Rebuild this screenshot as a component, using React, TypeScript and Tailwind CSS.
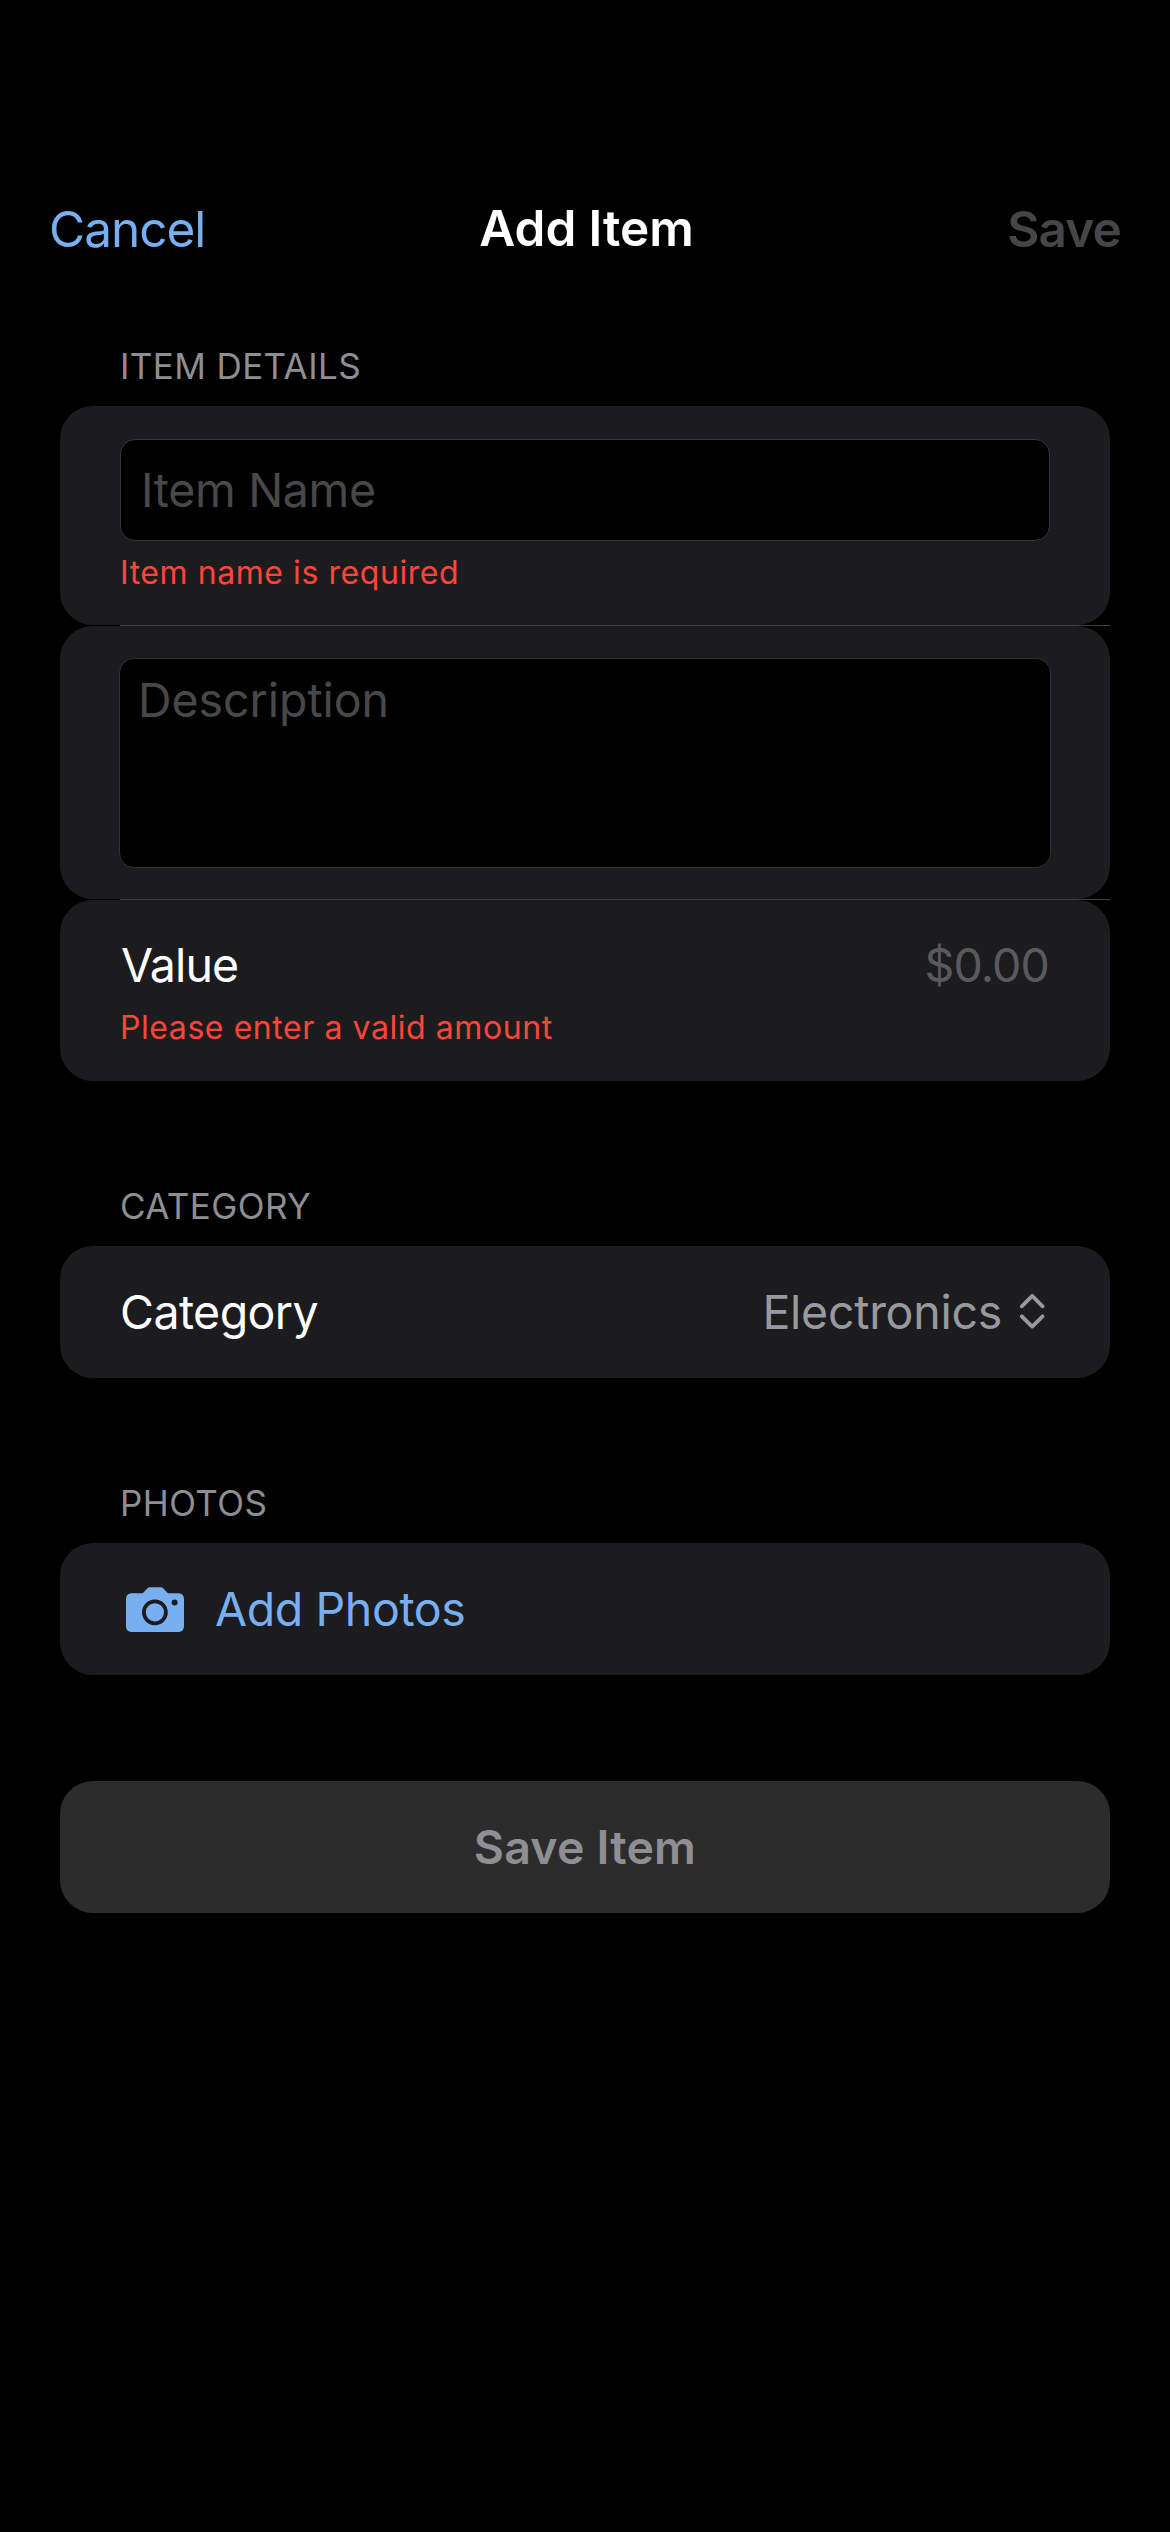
import type { ReactNode } from "react";

function Heading({ children }: { children: ReactNode }) {
  return (
    <h2 className="mb-[20px] ml-[120px] h-[40px] text-[35px] leading-[40px] tracking-[0.4px] text-[#8e8e93]">
      {children}
    </h2>
  );
}

function Card({ className, children }: { className: string; children: ReactNode }) {
  return <div className={`mx-[60px] rounded-[33px] bg-[#1c1c1e] px-[60px] ${className}`}>{children}</div>;
}

function Separator() {
  return <div className="mr-[60px] ml-[120px] h-px bg-[#3d3d41]" />;
}

function ErrorText({ children }: { children: ReactNode }) {
  return <p className="h-[40px] text-[32px] leading-[40px] tracking-[0.565px] text-[#ff453a]">{children}</p>;
}

function CameraIcon() {
  return (
    <svg width="58" height="46" viewBox="0 0 58 46" className="shrink-0">
      <path
        fill="#78aff0"
        d="M6 6.3H15.5C16.3 6.3 16.9 6 17.5 5.4L20.8 1.9C21.7 .9 22.7 .3 24.2 .3H34.5C36 .3 37 .9 37.9 1.9L41.2 5.4C41.8 6 42.4 6.3 43.2 6.3H52C55.8 6.3 58 8.4 58 12.2V39.1C58 43 55.8 45.1 52 45.1H6C2.2 45.1 0 43 0 39.1V12.2C0 8.4 2.2 6.3 6 6.3Z"
      />
      <circle cx="28.9" cy="25.3" r="11" fill="none" stroke="#1c1c1e" strokeWidth="3.8" />
      <circle cx="48.6" cy="15.5" r="3" fill="#1c1c1e" />
    </svg>
  );
}

function ChevronsIcon() {
  return (
    <svg width="28" height="40" viewBox="0 0 28 40" className="shrink-0">
      <path
        d="M3.8 15.3 14.2 4.8 24.6 15.3M3.8 25.3 14.2 35.6 24.6 25.3"
        fill="none"
        stroke="#98989f"
        strokeWidth="3.8"
        strokeLinecap="round"
        strokeLinejoin="round"
      />
    </svg>
  );
}

export default function App() {
  return (
    <div className="min-h-[2532px] w-[1170px] bg-black font-['Inter',sans-serif] text-[46.5px] leading-[60px] text-white antialiased">
      <header className="grid h-[273px] grid-cols-[1fr_auto_1fr] items-center px-[49px] pt-[185px] text-[49.5px]">
        <button className="justify-self-start tracking-[-1px] text-[#78aff0]">Cancel</button>
        <h1 className="pb-[2px] pl-[3px] font-semibold tracking-[-0.06px]">Add Item</h1>
        <button className="justify-self-end font-semibold tracking-[-0.84px] text-[#464649]">Save</button>
      </header>

      <main className="pt-[73px]">
        <section className="mb-[105px]">
          <Heading>ITEM DETAILS</Heading>
          <Card className="h-[219px] pt-[33px]">
            <div className="mb-[12px] flex h-[102px] items-center rounded-[15px] border border-[#363638] bg-black pl-[20px] tracking-[-0.34px] text-[#48484a]">
              Item Name
            </div>
            <ErrorText>Item name is required</ErrorText>
          </Card>
          <Separator />
          <Card className="h-[273px] pt-[32px]">
            <div className="-mx-px h-[210px] rounded-[15px] border border-[#303032] bg-black pt-[11px] pl-[18px] tracking-[-0.05px] text-[#48484a]">
              Description
            </div>
          </Card>
          <Separator />
          <Card className="h-[181px] pt-[35px]">
            <div className="mb-[13px] flex justify-between px-px">
              <span className="tracking-[-0.9px]">Value</span>
              <span className="tracking-[-0.88px] text-[#5a5a5e]">$0.00</span>
            </div>
            <ErrorText>Please enter a valid amount</ErrorText>
          </Card>
        </section>

        <section className="mb-[105px]">
          <Heading>CATEGORY</Heading>
          <Card className="flex h-[132px] items-center">
            <span className="grow tracking-[-0.58px]">Category</span>
            <span className="mr-[16px] tracking-[-0.27px] text-[#98989f]">Electronics</span>
            <span className="mr-[4px] mb-[2px]">
              <ChevronsIcon />
            </span>
          </Card>
        </section>

        <section className="mb-[106px]">
          <Heading>PHOTOS</Heading>
          <Card className="flex h-[132px] items-center">
            <span className="mt-[2px] mr-[31px] ml-[6px]">
              <CameraIcon />
            </span>
            <span className="tracking-[-0.39px] text-[#78aff0]">Add Photos</span>
          </Card>
        </section>

        <div className="mx-[60px] flex h-[132px] items-center justify-center rounded-[33px] bg-[#2c2c2c] font-semibold tracking-[0.18px] text-[#8e8e93]">
          Save Item
        </div>
      </main>
    </div>
  );
}
